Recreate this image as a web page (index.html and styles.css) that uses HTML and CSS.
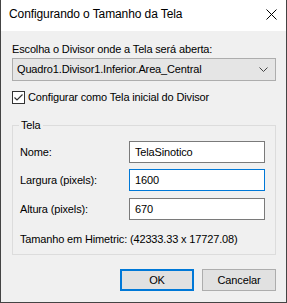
FILE: index.html
```html
<!DOCTYPE html>
<html lang="pt">
<head>
    <meta charset="UTF-8">
    <title>Configurando o Tamanho da Tela</title>
    <link rel="stylesheet" href="styles.css">
</head>
<body>
    <div class="window">
        <div class="titlebar">
            <span class="title">Configurando o Tamanho da Tela</span>
            <svg class="close" width="11" height="11" viewBox="0 0 11 11">
                <path d="M0.5 0.5 L10.5 10.5 M10.5 0.5 L0.5 10.5" stroke="#000" stroke-width="1"/>
            </svg>
        </div>

        <div class="content">
            <div class="label">Escolha o Divisor onde a Tela será aberta:</div>
            <div class="combo">
                <span>Quadro1.Divisor1.Inferior.Area_Central</span>
                <svg width="9" height="5" viewBox="0 0 9 5">
                    <polyline points="0.5,0.5 4.5,4.5 8.5,0.5" fill="none" stroke="#444" stroke-width="1"/>
                </svg>
            </div>

            <label class="check-row">
                <svg class="checkbox" width="13" height="13" viewBox="0 0 13 13">
                    <rect x="0.5" y="0.5" width="12" height="12" fill="#fff" stroke="#333"/>
                    <polyline points="2.5,6.5 5,9 10.5,3.5" fill="none" stroke="#333" stroke-width="1.2"/>
                </svg>
                Configurar como Tela inicial do Divisor
            </label>

            <div class="group">
                <span class="legend">Tela</span>
                <div class="field">
                    <span class="field-label">Nome:</span>
                    <div class="input">TelaSinotico</div>
                </div>
                <div class="field">
                    <span class="field-label">Largura (pixels):</span>
                    <div class="input focused">1600</div>
                </div>
                <div class="field field-last">
                    <span class="field-label">Altura (pixels):</span>
                    <div class="input">670</div>
                </div>
                <div class="himetric">Tamanho em Himetric: (42333.33 x 17727.08)</div>
            </div>

            <div class="buttons">
                <button class="btn default">OK</button>
                <button class="btn">Cancelar</button>
            </div>
        </div>
    </div>
</body>
</html>
```

FILE: styles.css
```css
* {
    margin: 0;
    padding: 0;
    box-sizing: border-box;
}

body {
    width: 287px;
    height: 303px;
    font-family: 'Liberation Sans', Arial, sans-serif;
    font-size: 11px;
    letter-spacing: -0.15px;
    line-height: 15px;
    color: #000;
    background: #f0f0f0;
    overflow: hidden;
    white-space: nowrap;
}

.window {
    width: 287px;
    height: 303px;
    border: 1px solid #444;
    border-top: none;
    background: #f0f0f0;
}

.titlebar {
    height: 31px;
    background: #fff;
    display: flex;
    align-items: center;
    justify-content: space-between;
    padding: 0 9px 2px 8px;
}

.title {
    font-size: 12px;
    letter-spacing: -0.1px;
}

.close {
    display: block;
}

.content {
    padding: 11px 10px 0 11px;
}

.label {
    height: 15px;
}

.combo {
    margin-top: 1px;
    height: 23px;
    background: #e5e5e5;
    border: 1px solid #adadad;
    display: flex;
    align-items: center;
    justify-content: space-between;
    padding: 0 7px 0 4px;
}

.combo svg {
    display: block;
}

.check-row {
    margin-top: 10px;
    display: flex;
    align-items: center;
    gap: 3px;
    height: 13px;
}

.checkbox {
    display: block;
    flex-shrink: 0;
}

.group {
    position: relative;
    margin-top: 21px;
    border: 1px solid #dcdcdc;
    padding: 15px 10px 7px 7px;
}

.legend {
    position: absolute;
    top: -8px;
    left: 6px;
    padding: 0 2px;
    background: #f0f0f0;
}

.field {
    display: flex;
    align-items: center;
    justify-content: space-between;
    height: 22px;
    margin-bottom: 6px;
}

.field + .field {
    margin-bottom: 7px;
}

.field.field-last {
    margin-bottom: 12px;
}

.input {
    width: 136px;
    height: 22px;
    background: #fff;
    border: 1px solid #7a7a7a;
    padding: 3px 5px;
}

.input.focused {
    border-color: #0078d7;
}

.buttons {
    margin-top: 14px;
    display: flex;
    justify-content: flex-end;
    gap: 8px;
}

.btn {
    width: 74px;
    height: 22px;
    font: inherit;
    letter-spacing: inherit;
    color: #000;
    background: #e1e1e1;
    border: 1px solid #adadad;
}

.btn.default {
    border: 2px solid #0078d7;
}
```
